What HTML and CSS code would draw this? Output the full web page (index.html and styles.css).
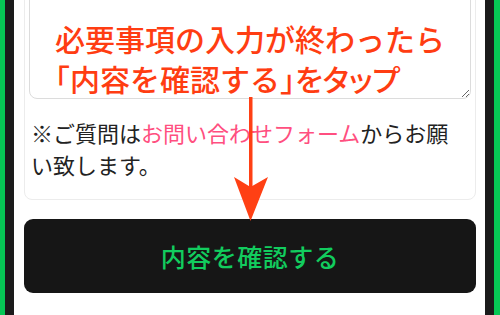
FILE: index.html
```html
<!DOCTYPE html>
<html lang="ja">
<head>
<meta charset="utf-8">
<link rel="stylesheet" href="styles.css">
</head>
<body>
<div class="frame">
  <div class="card">
    <textarea class="field"></textarea>
    <p class="note">※ご質問は<a class="link" href="#">お問い合わせフォーム</a>からお願い致します。</p>
  </div>
  <button class="submit" type="button">内容を確認する</button>

  <div class="callout">
    <div class="line">必要事項の入力が終わったら</div>
    <div class="line"><span class="half">「</span>内容を確認する<span class="half">」</span><span class="small">をタップ</span></div>
  </div>
  <svg class="arrow" width="40" height="130" viewBox="0 0 40 130">
    <rect x="18" y="0" width="3.5" height="95" fill="#ff4014"/>
    <polygon points="3,80 19.5,90 37,80 19.5,124" fill="#ff4014"/>
  </svg>
</div>
</body>
</html>
```

FILE: styles.css
```css
* { box-sizing: border-box; }
html, body {
  margin: 0;
  padding: 0;
}
body {
  width: 500px;
  height: 315px;
  overflow: hidden;
  background: #06c755;
  font-family: "Noto Sans CJK JP", "Noto Sans", sans-serif;
}
.frame {
  position: relative;
  margin: 0 6px 0 5px;
  height: 315px;
  background: #fff;
  border-left: 9px solid #1b1b1b;
  border-right: 9px solid #1b1b1b;
  padding: 0 9px 0 10px;
  overflow: hidden;
}
.card {
  margin-top: -20px;
  border: 1px solid #ececec;
  border-radius: 8px;
  padding: 5px 4px 19px 4px;
  background: #fff;
}
.field {
  display: block;
  width: 100%;
  height: 113px;
  border: 1px solid #dcdcdc;
  border-radius: 8px;
  background: #fff;
  resize: vertical;
  outline: none;
}
.note {
  margin: 17px 0 0;
  padding: 0 14px 0 2px;
  font-size: 22px;
  line-height: 32px;
  color: #222;
}
.link {
  color: #ff4f80;
  text-decoration: none;
}
.submit {
  display: flex;
  align-items: center;
  justify-content: center;
  width: 100%;
  height: 74px;
  margin-top: 19px;
  border: 0;
  border-radius: 9px;
  background: #161616;
  color: #12cc5e;
  font-family: "Noto Sans CJK JP", "Noto Sans", sans-serif;
  font-size: 25px;
  font-weight: 500;
  letter-spacing: 0.5px;
}
.callout {
  position: absolute;
  left: 41px;
  top: 18px;
  color: #ff3d12;
  font-size: 30px;
  line-height: 40px;
  font-weight: 500;
  white-space: nowrap;
}
.half {
  font-feature-settings: "halt";
}
.small {
  font-feature-settings: "palt";
}
.arrow {
  position: absolute;
  left: 217px;
  top: 97px;
}
```
